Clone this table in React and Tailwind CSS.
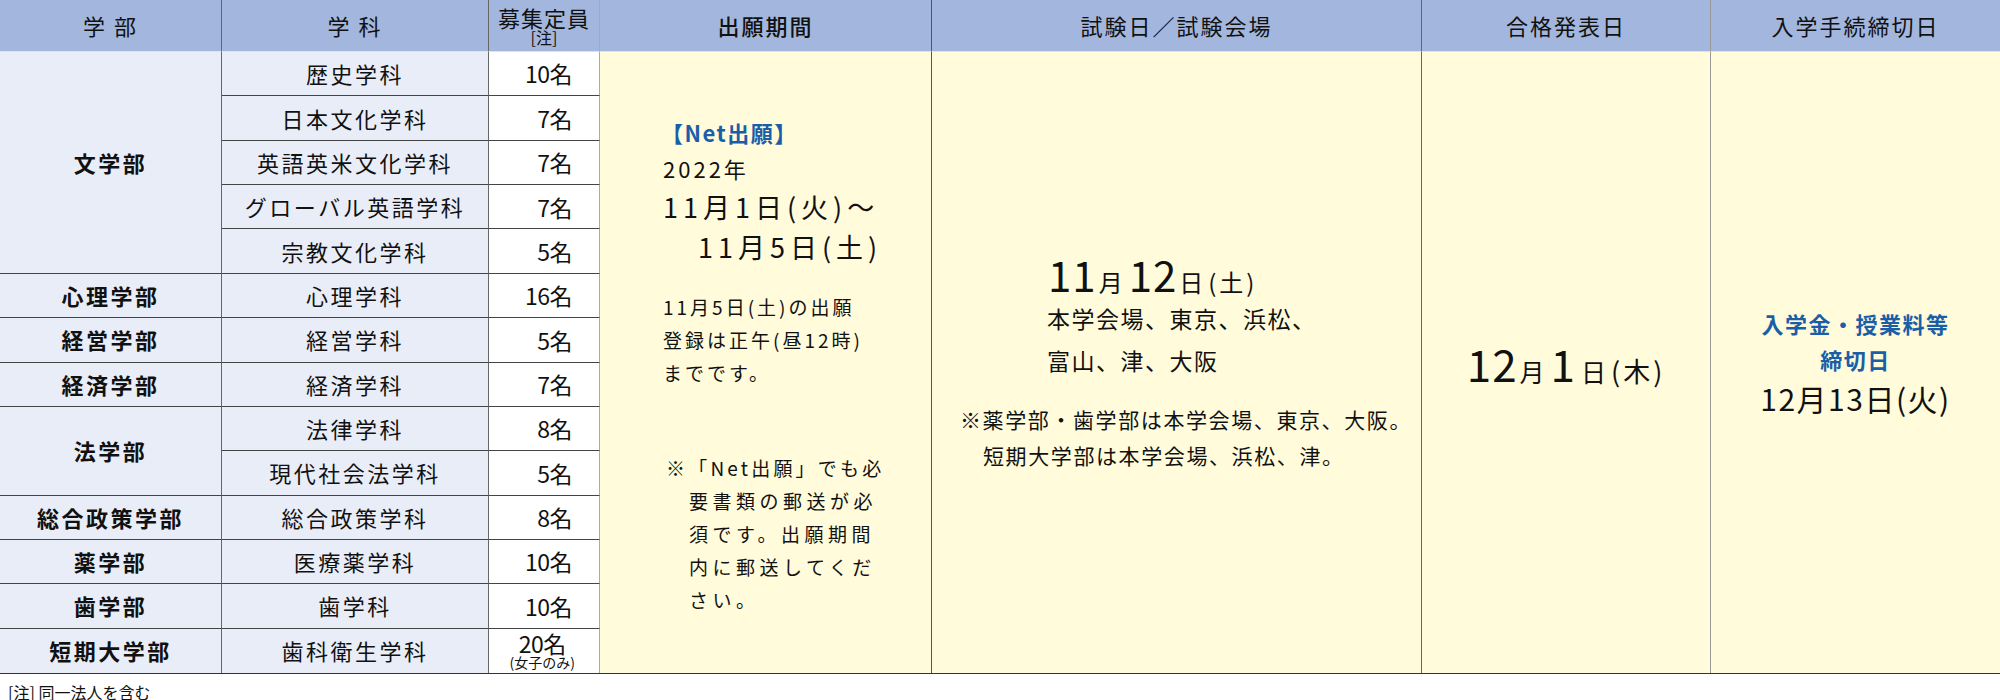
import React from 'react';

const font = "font-['Noto_Sans_CJK_JP','Noto_Sans',sans-serif]";

const faculties = [
  { name: '文学部', depts: [['歴史学科', '10名'], ['日本文化学科', '7名'], ['英語英米文化学科', '7名'], ['グローバル英語学科', '7名'], ['宗教文化学科', '5名']] },
  { name: '心理学部', depts: [['心理学科', '16名']] },
  { name: '経営学部', depts: [['経営学科', '5名']] },
  { name: '経済学部', depts: [['経済学科', '7名']] },
  { name: '法学部', depts: [['法律学科', '8名'], ['現代社会法学科', '5名']] },
  { name: '総合政策学部', depts: [['総合政策学科', '8名']] },
  { name: '薬学部', depts: [['医療薬学科', '10名']] },
  { name: '歯学部', depts: [['歯学科', '10名']] },
  { name: '短期大学部', depts: [['歯科衛生学科', '20名', '(女子のみ)']] },
];

const spans = {
  1: 'row-span-1',
  2: 'row-span-2',
  5: 'row-span-5',
};

const Head = ({ children, className = '' }) => (
  <div className={`flex items-center justify-center bg-[#a3b7de] border-b border-[#dbe2ef] text-[22px] tracking-[2px] text-[#111] ${className}`}>
    {children}
  </div>
);

export default function App() {
  const total = faculties.reduce((n, f) => n + f.depts.length, 0);
  let rowIndex = 0;

  return (
    <div className={`w-[2000px] h-[700px] bg-white text-[#111] ${font}`}>
      <div className="grid grid-cols-[222px_267px_111px_332px_490px_289px_289px] grid-rows-[52px_repeat(14,44.36px)]">
        {/* header */}
        <Head className="border-r border-r-[#666]">学&nbsp;部</Head>
        <Head className="border-r border-r-[#666]">学&nbsp;科</Head>
        <Head className="border-r border-r-[#aaa] flex-col">
          <span className="tracking-[1px] leading-[22px]">募集定員</span>
          <span className="text-[16px] tracking-normal leading-[18px]">[注]</span>
        </Head>
        <Head className="border-r border-r-[#555] font-medium">出願期間</Head>
        <Head className="border-r border-r-[#666]">試験日／試験会場</Head>
        <Head className="border-r border-r-[#999]">合格発表日</Head>
        <Head>入学手続締切日</Head>

        {faculties.map((f, fi) => {
          const cells = [];
          const lastFac = fi === faculties.length - 1;
          cells.push(
            <div
              key={`f${fi}`}
              className={`col-start-1 ${spans[f.depts.length]} flex items-center justify-center bg-[#e9edf8] border-r border-[#666] ${lastFac ? '' : 'border-b border-b-[#444]'} text-[22px] tracking-[2.5px] font-bold`}
            >
              {f.name}
            </div>
          );
          f.depts.forEach((d, di) => {
            rowIndex += 1;
            const last = rowIndex === total;
            cells.push(
              <div
                key={`d${fi}-${di}`}
                className={`col-start-2 flex items-center justify-center bg-[#e9edf8] border-r border-[#666] ${last ? '' : 'border-b border-b-[#444]'} text-[22px] tracking-[2.5px]`}
              >
                {d[0]}
              </div>
            );
            cells.push(
              <div
                key={`n${fi}-${di}`}
                className={`col-start-3 flex items-center justify-end pr-[27px] bg-white border-r border-[#aaa] ${last ? '' : 'border-b border-b-[#444]'}`}
              >
                {d[2] ? (
                  <div className="flex flex-col items-center -mr-[3px]">
                    <span className="text-[23px] tracking-[-0.5px] leading-[22px]">{d[1]}</span>
                    <span className="text-[14px] leading-[16px]">{d[2]}</span>
                  </div>
                ) : (
                  <span className="text-[23px] tracking-[-0.5px]">{d[1]}</span>
                )}
              </div>
            );
          });
          if (fi === 0) {
            cells.push(
              <div key="apply" className="col-start-4 row-start-2 row-span-14 bg-[#fffbdb] border-r border-[#555] pt-[62px] whitespace-nowrap">
                <div className="pl-[61px] text-[22px] leading-[36px] font-bold text-[#1a5ea8] tracking-[1.5px]">【Net出願】</div>
                <div className="pl-[63px] text-[22px] leading-[36px] tracking-[3px]">2022年</div>
                <div className="pl-[63px] text-[27px] leading-[42px] tracking-[5px]">11月1日(火)〜</div>
                <div className="pl-[98px] text-[27px] leading-[38px] tracking-[5px]">11月5日(土)</div>
                <div className="mt-[24px] pl-[63px] text-[19px] leading-[33px] tracking-[3px]">
                  <div>11月5日(土)の出願</div>
                  <div>登録は正午(昼12時)</div>
                  <div>までです。</div>
                </div>
                <div className="mt-[62px] text-[19px] leading-[33px] tracking-[4.5px]">
                  <div className="pl-[66px] tracking-[3.2px]">※「Net出願」でも必</div>
                  <div className="pl-[89px]">要書類の郵送が必</div>
                  <div className="pl-[89px]">須です。出願期間</div>
                  <div className="pl-[89px]">内に郵送してくだ</div>
                  <div className="pl-[89px]">さい。</div>
                </div>
              </div>
            );
            cells.push(
              <div key="exam" className="col-start-5 row-start-2 row-span-14 bg-[#fffbdb] border-r border-[#666] pt-[199px] whitespace-nowrap">
                <div className="h-[46px] pl-[116px] flex items-center">
                  <div className="flex items-baseline leading-none">
                    <span className="text-[42px] tracking-[1px]">11</span>
                    <span className="text-[24px] ml-[2px]">月</span>
                    <span className="text-[42px] ml-[6px] tracking-[1px]">12</span>
                    <span className="text-[24px] ml-[2px]">日</span>
                    <span className="text-[24px] ml-[5px] tracking-[3px]">(土)</span>
                  </div>
                </div>
                <div className="pl-[115px] text-[23px] leading-[42px] tracking-[1.5px]">本学会場、東京、浜松、</div>
                <div className="pl-[115px] text-[23px] leading-[42px] tracking-[1.5px]">富山、津、大阪</div>
                <div className="mt-[20px] text-[21px] leading-[36px] tracking-[1.6px]">
                  <div className="pl-[28px]">※薬学部・歯学部は本学会場、東京、大阪。</div>
                  <div className="pl-[51px]">短期大学部は本学会場、浜松、津。</div>
                </div>
              </div>
            );
            cells.push(
              <div key="pass" className="col-start-6 row-start-2 row-span-14 bg-[#fffbdb] border-r border-[#999] flex items-center justify-center">
                <div className="flex items-baseline whitespace-nowrap leading-none">
                  <span className="text-[44px] tracking-[1px]">12</span>
                  <span className="text-[25px] ml-[2px]">月</span>
                  <span className="text-[44px] ml-[6px]">1</span>
                  <span className="text-[25px] ml-[6px]">日</span>
                  <span className="text-[27px] ml-[5px] tracking-[3px]">(木)</span>
                </div>
              </div>
            );
            cells.push(
              <div key="proc" className="col-start-7 row-start-2 row-span-14 bg-[#fffbdb] flex flex-col items-center justify-center pb-[2px]">
                <div className="text-[22px] leading-[36px] font-bold text-[#1a5ea8] tracking-[1.5px]">入学金・授業料等</div>
                <div className="text-[22px] leading-[36px] font-bold text-[#1a5ea8] tracking-[1.5px]">締切日</div>
                <div className="text-[30px] leading-[42px] tracking-[1.5px]">12月13日(火)</div>
              </div>
            );
          }
          return cells;
        })}
      </div>
      <div className="h-px w-full bg-[#333]" />
      <div className="pl-[8px] pt-[8px] text-[16px] leading-[20px]">[注] 同一法人を含む</div>
    </div>
  );
}
